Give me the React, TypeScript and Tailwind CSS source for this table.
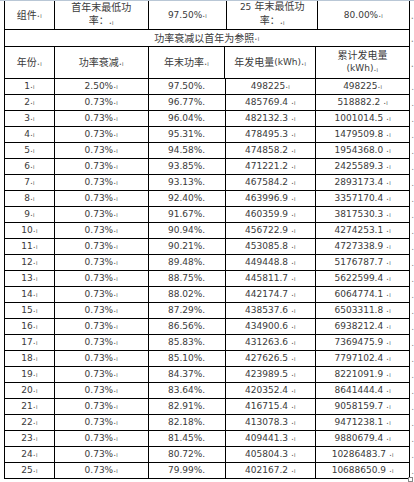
import React from 'react';

const rows: [string, string, string, string, string][] = [
  ['1', '2.50%', '97.50%', '498225', '498225'],
  ['2', '0.73%', '96.77%', '485769.4', '518882.2'],
  ['3', '0.73%', '96.04%', '482132.3', '1001014.5'],
  ['4', '0.73%', '95.31%', '478495.3', '1479509.8'],
  ['5', '0.73%', '94.58%', '474858.2', '1954368.0'],
  ['6', '0.73%', '93.85%', '471221.2', '2425589.3'],
  ['7', '0.73%', '93.13%', '467584.2', '2893173.4'],
  ['8', '0.73%', '92.40%', '463996.9', '3357170.4'],
  ['9', '0.73%', '91.67%', '460359.9', '3817530.3'],
  ['10', '0.73%', '90.94%', '456722.9', '4274253.1'],
  ['11', '0.73%', '90.21%', '453085.8', '4727338.9'],
  ['12', '0.73%', '89.48%', '449448.8', '5176787.7'],
  ['13', '0.73%', '88.75%', '445811.7', '5622599.4'],
  ['14', '0.73%', '88.02%', '442174.7', '6064774.1'],
  ['15', '0.73%', '87.29%', '438537.6', '6503311.8'],
  ['16', '0.73%', '86.56%', '434900.6', '6938212.4'],
  ['17', '0.73%', '85.83%', '431263.6', '7369475.9'],
  ['18', '0.73%', '85.10%', '427626.5', '7797102.4'],
  ['19', '0.73%', '84.37%', '423989.5', '8221091.9'],
  ['20', '0.73%', '83.64%', '420352.4', '8641444.4'],
  ['21', '0.73%', '82.91%', '416715.4', '9058159.7'],
  ['22', '0.73%', '82.18%', '413078.3', '9471238.1'],
  ['23', '0.73%', '81.45%', '409441.3', '9880679.4'],
  ['24', '0.73%', '80.72%', '405804.3', '10286483.7'],
  ['25', '0.73%', '79.99%', '402167.2', '10688650.9'],
];

// Word 的段落标记
const Mark: React.FC = () => (
  <span className="text-[#555]">
    .<span className="text-[7px] align-[-1px] text-[#777]">ı</span>
  </span>
);

const cell = 'flex items-center justify-center border-r border-b border-black text-center';

export default function App() {
  return (
    <div
      className="w-[414px] h-[482px] bg-white text-[#3a3a3a] overflow-hidden relative"
      style={{ fontFamily: '"DejaVu Sans", "Noto Sans CJK SC", sans-serif' }}
    >
      <div className="h-px w-full bg-[#b9c7d6]" />
      <div className="pl-[4px] text-[10px] leading-[13px]">
        {/* 第一行 */}
        <div className="flex h-[29px]">
          <div className={`${cell} border-l w-[51px]`}>组件<Mark /></div>
          <div className={`${cell} w-[94px] flex-col`}>
            <span>首年末最低功</span>
            <span>率：<Mark /></span>
          </div>
          <div className={`${cell} w-[79px] text-[9px]`}>97.50%<Mark /></div>
          <div className={`${cell} w-[91px] flex-col`}>
            <span><span className="text-[9px]">25</span> 年末最低功</span>
            <span>率：<Mark /></span>
          </div>
          <div className={`${cell} w-[92px] text-[9px]`}>80.00%<Mark /></div>
          <span className="text-[#888] pl-[1px] self-center">.</span>
        </div>
        {/* 第二行 */}
        <div className="flex h-[17px]">
          <div className={`${cell} border-l w-[407px]`}>功率衰减以首年为参照<Mark /></div>
          <span className="text-[#888] pl-[1px] self-center">.</span>
        </div>
        {/* 表头 */}
        <div className="flex h-[32px]">
          <div className={`${cell} border-l w-[51px]`}>年份<Mark /></div>
          <div className={`${cell} w-[94px]`}>功率衰减<Mark /></div>
          <div className={`${cell} w-[77px]`}>年末功率<Mark /></div>
          <div className={`${cell} w-[91px]`}>年发电量<span className="text-[9px]">(kWh)</span><Mark /></div>
          <div className={`${cell} w-[94px] flex-col`}>
            <span>累计发电量</span>
            <span className="text-[9px]">(kWh)<Mark /></span>
          </div>
          <span className="text-[#888] pl-[1px] self-center">.</span>
        </div>
        {rows.map((r, i) => (
          <div key={r[0]} className="flex h-[16px] text-[9px]">
            <div className={`${cell} border-l w-[51px]`}>{r[0]}<Mark /></div>
            <div className={`${cell} w-[94px]`}>{r[1]}<Mark /></div>
            <div className={`${cell} w-[77px]`}>{r[2]}.</div>
            <div className={`${cell} w-[91px]`}>
              {r[3]}
              {i > 0 && <span>&nbsp;</span>}
              <Mark />
            </div>
            <div className={`${cell} w-[94px]`}>
              {r[4]}
              {i > 0 && <span>&nbsp;</span>}
              <Mark />
            </div>
            <span className="text-[#888] pl-[1px] self-center">.</span>
          </div>
        ))}
      </div>
      <div className="absolute left-[408px] top-[477px] w-[5px] h-[5px] border border-[#888] bg-white" />
    </div>
  );
}
